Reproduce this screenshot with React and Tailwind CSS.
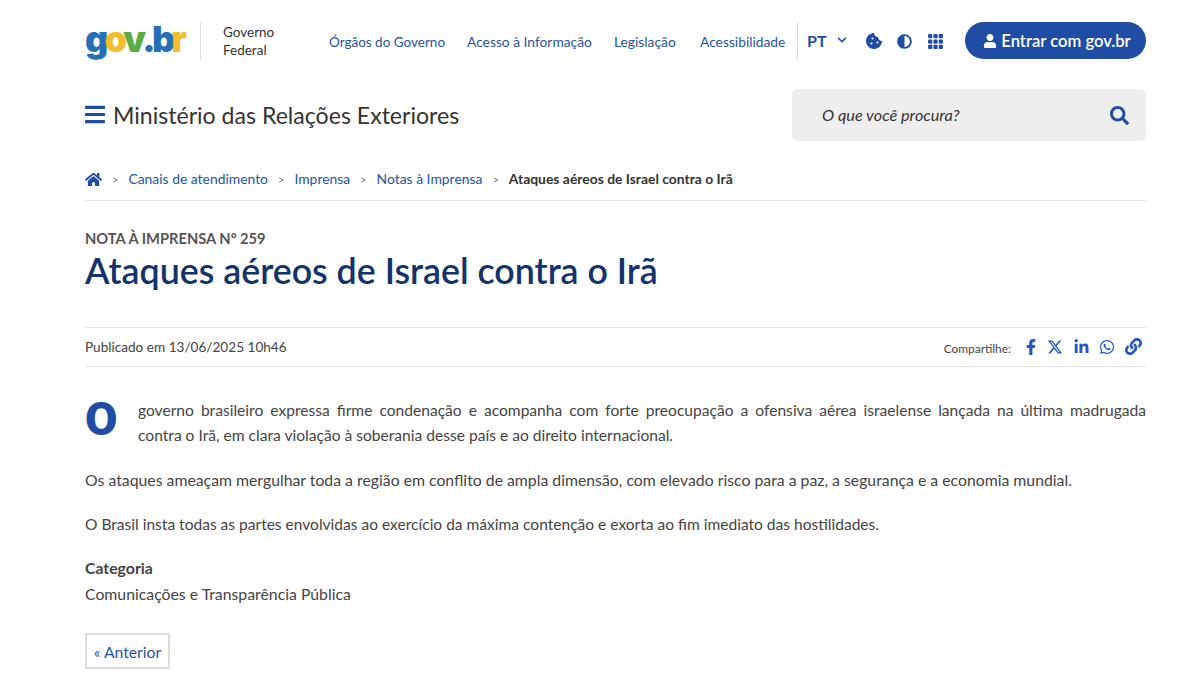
import React from "react";
import { FaHome, FaSearch, FaUser, FaCookieBite, FaAdjust, FaFacebookF, FaLinkedinIn, FaWhatsapp, FaLink, FaChevronDown, FaBars } from "react-icons/fa";
import { FaXTwitter } from "react-icons/fa6";
import { BsGrid3X3GapFill } from "react-icons/bs";

const crumbs = ["Canais de atendimento", "Imprensa", "Notas à Imprensa"];

const Sep = () => <span className="text-[11px] text-[#777]">&gt;</span>;

export default function App() {
    return (
        <div className="h-[684px] overflow-hidden bg-white pl-[85px] pr-[54px] font-['Lato','Noto_Sans',sans-serif] text-[#444]">
            {/* Top bar */}
            <header className="flex h-[38px] mt-[22px] items-center">
                <div className="mb-[4px] flex w-[102px] text-[36px] leading-none font-['Inter',sans-serif] font-black tracking-[-0.105em]">
                    <span className="text-[#2670b8]">g</span>
                    <span className="text-[#f5bd2e]">o</span>
                    <span className="text-[#5dab45]">v</span>
                    <span className="text-[#2670b8]">.</span>
                    <span className="text-[#2670b8]">b</span>
                    <span className="text-[#f5bd2e]">r</span>
                </div>
                <div className="ml-[13px] h-[38px] w-px bg-[#ddd]" />
                <div className="ml-[22px] w-[84px] text-[13.5px] leading-[18px] text-[#333]">
                    <div>Governo</div>
                    <div>Federal</div>
                </div>
                <nav className="ml-[22px] mt-[2px] flex gap-[22px] whitespace-nowrap text-[13.8px] text-[#2455a4]">
                    <a className="w-[116px] text-[13.5px]">Órgãos do Governo</a>
                    <a className="w-[125px]">Acesso à Informação</a>
                    <a className="w-[64px]">Legislação</a>
                    <a className="w-[86px]">Acessibilidade</a>
                </nav>
                <div className="ml-[11px] h-[38px] w-px bg-[#ddd]" />
                <div className="ml-[9px] flex items-center text-[#1f4da5]">
                    <span className="w-[18px] text-[16px] font-bold">PT</span>
                    <FaChevronDown className="ml-[12px] mb-[3px] h-[10px] w-[10px]" />
                    <FaCookieBite className="ml-[19px] h-[16px] w-[16px]" />
                    <FaAdjust className="ml-[15px] h-[15px] w-[15px]" />
                    <BsGrid3X3GapFill className="ml-[15px] h-[17px] w-[17px]" />
                </div>
                <button className="mb-[1px] ml-auto flex h-[37px] w-[181px] items-center justify-center rounded-full bg-[#1f4da5] pl-[3px] pt-[1px] text-[16.6px] font-semibold text-white">
                    <FaUser className="mr-[4px] h-[14px] w-[14px]" />
                    Entrar com gov.br
                </button>
            </header>

            {/* Title + search */}
            <div className="mt-[29px] flex h-[52px] items-center justify-between">
                <div className="flex items-center">
                    <FaBars className="h-[23px] w-[20px] text-[#1f4da5]" />
                    <span className="ml-[8px] text-[23.1px] text-[#333]">Ministério das Relações Exteriores</span>
                </div>
                <div className="flex h-[52px] w-[354px] items-center justify-between rounded-md bg-[#eeeeee] pl-[30px] pr-[17px]">
                    <span className="text-[16.3px] italic text-[#333]">O que você procura?</span>
                    <FaSearch className="h-[19px] w-[19px] text-[#1f4da5]" />
                </div>
            </div>

            {/* Breadcrumb */}
            <div className="mt-[28px] flex h-[32px] items-start border-b border-[#e6e6e6] text-[13.9px] text-[#2455a4]">
                <div className="flex h-[20px] items-center">
                    <FaHome className="h-[17px] w-[17px] text-[#1f4da5]" />
                    <span className="ml-[10px] mr-[10px]"><Sep /></span>
                    {crumbs.map((c) => (
                        <React.Fragment key={c}>
                            <a>{c}</a>
                            <span className="mx-[10px]"><Sep /></span>
                        </React.Fragment>
                    ))}
                    <span className="font-bold text-[#333]">Ataques aéreos de Israel contra o Irã</span>
                </div>
            </div>

            {/* Heading */}
            <div className="mt-[27px] text-[14.7px] font-bold leading-[20px] text-[#555]">NOTA À IMPRENSA Nº 259</div>
            <h1 className="mt-[2px] text-[35.75px] font-semibold leading-[42px] text-[#12336b]">Ataques aéreos de Israel contra o Irã</h1>

            {/* Meta row */}
            <div className="mt-[35px] flex h-[40px] items-center justify-between border-y border-[#e6e6e6] pr-[4px] text-[#444]">
                <span className="text-[13.6px]">Publicado em 13/06/2025 10h46</span>
                <div className="flex items-center text-[#2455c4]">
                    <span className="mr-[14px] mt-[3px] text-[11.9px] text-[#444]">Compartilhe:</span>
                    <FaFacebookF className="h-[16px] w-[12px]" />
                    <FaXTwitter className="ml-[10px] h-[16px] w-[16px]" />
                    <FaLinkedinIn className="ml-[11px] h-[16px] w-[15px]" />
                    <FaWhatsapp className="ml-[10px] h-[16px] w-[16px]" />
                    <FaLink className="ml-[10px] h-[17px] w-[17px]" />
                </div>
            </div>

            {/* Body */}
            <div className="mt-[30px] flex">
                <span className="w-[53px] font-['Roboto',sans-serif] text-[47px] font-black leading-[44px] text-[#1f4da5]">O</span>
                <p className="flex-1 pt-[1px] text-[15.6px] leading-[25px] text-[#444]">
                    <span className="block text-justify [text-align-last:justify]">governo brasileiro expressa firme condenação e acompanha com forte preocupação a ofensiva aérea israelense lançada na última madrugada</span>
                    <span className="block">contra o Irã, em clara violação à soberania desse país e ao direito internacional.</span>
                </p>
            </div>
            <p className="mt-[19.4px] text-[15.8px] leading-[25.6px]">
                Os ataques ameaçam mergulhar toda a região em conflito de ampla dimensão, com elevado risco para a paz, a segurança e a economia mundial.
            </p>
            <p className="mt-[19px] text-[15.55px] leading-[25.6px]">
                O Brasil insta todas as partes envolvidas ao exercício da máxima contenção e exorta ao fim imediato das hostilidades.
            </p>
            <div className="mt-[17.8px] text-[15.8px] font-bold leading-[25.6px]">Categoria</div>
            <div className="text-[15.8px] leading-[25.6px]">Comunicações e Transparência Pública</div>
            <a className="mt-[26.6px] flex h-[36px] w-[85px] items-center justify-center border-2 border-[#ddd] pt-[3px] text-[15.7px] text-[#2455a4]">« Anterior</a>
        </div>
    );
}
